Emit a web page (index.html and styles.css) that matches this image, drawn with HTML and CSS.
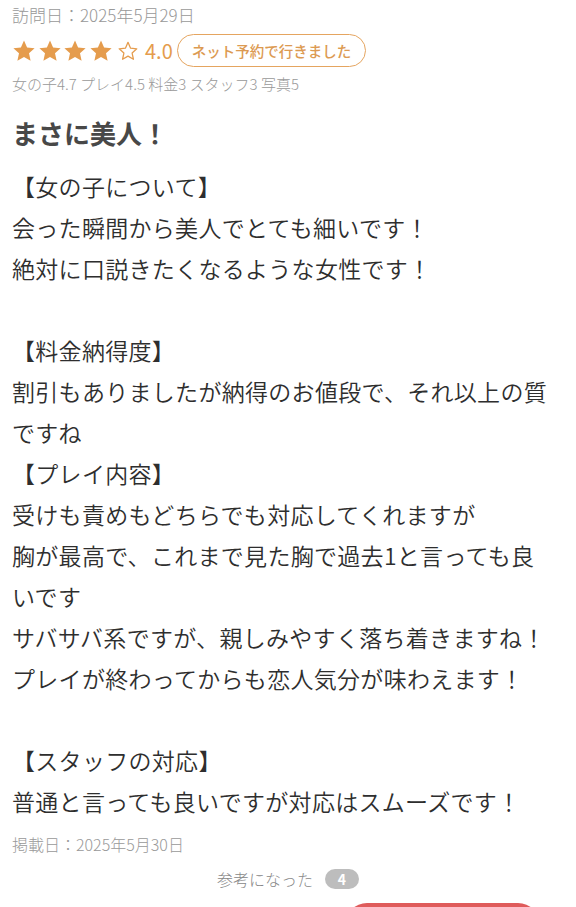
FILE: index.html
```html
<!DOCTYPE html>
<html lang="ja">
<head>
<meta charset="utf-8">
<link rel="stylesheet" href="styles.css">
</head>
<body>
<div class="review">
  <div class="visit">訪問日：2025年5月29日</div>
  <div class="rating">
    <div class="stars">
      <svg class="star" viewBox="0 0 24 24"><polygon points="12,1.5 15.1,8.4 22.6,9.2 17,14.3 18.6,21.7 12,17.9 5.4,21.7 7,14.3 1.4,9.2 8.9,8.4"/></svg>
      <svg class="star" viewBox="0 0 24 24"><polygon points="12,1.5 15.1,8.4 22.6,9.2 17,14.3 18.6,21.7 12,17.9 5.4,21.7 7,14.3 1.4,9.2 8.9,8.4"/></svg>
      <svg class="star" viewBox="0 0 24 24"><polygon points="12,1.5 15.1,8.4 22.6,9.2 17,14.3 18.6,21.7 12,17.9 5.4,21.7 7,14.3 1.4,9.2 8.9,8.4"/></svg>
      <svg class="star" viewBox="0 0 24 24"><polygon points="12,1.5 15.1,8.4 22.6,9.2 17,14.3 18.6,21.7 12,17.9 5.4,21.7 7,14.3 1.4,9.2 8.9,8.4"/></svg>
      <svg class="star empty" viewBox="0 0 24 24"><polygon points="12,2.5 14.8,8.9 21.6,9.6 16.5,14.2 17.9,21 12,17.6 6.1,21 7.5,14.2 2.4,9.6 9.2,8.9"/></svg>
    </div>
    <span class="score">4.0</span>
    <span class="tag">ネット予約で行きました</span>
  </div>
  <div class="scores">女の子4.7 プレイ4.5 料金3 スタッフ3 写真5</div>
  <h1 class="title">まさに美人！</h1>
  <div class="body">
    <p>【女の子について】</p>
    <p>会った瞬間から美人でとても細いです！</p>
    <p>絶対に口説きたくなるような女性です！</p>
    <p class="blank"></p>
    <p>【料金納得度】</p>
    <p>割引もありましたが納得のお値段で、それ以上の質ですね</p>
    <p>【プレイ内容】</p>
    <p>受けも責めもどちらでも対応してくれますが</p>
    <p>胸が最高で、これまで見た胸で過去1と言っても良いです</p>
    <p>サバサバ系ですが、親しみやすく落ち着きますね！</p>
    <p>プレイが終わってからも恋人気分が味わえます！</p>
    <p class="blank"></p>
    <p>【スタッフの対応】</p>
    <p>普通と言っても良いですが対応はスムーズです！</p>
  </div>
  <div class="posted">掲載日：2025年5月30日</div>
  <div class="helpful">
    <span class="helpful-label">参考になった</span>
    <span class="badge">4</span>
  </div>
  <div class="actions">
    <div class="btn-red"></div>
  </div>
</div>
</body>
</html>
```
FILE: styles.css
```css
* { box-sizing: border-box; }
html, body {
  margin: 0;
  padding: 0;
  background: #ffffff;
}
body {
  font-family: "Noto Sans CJK JP", "Noto Sans", sans-serif;
  color: #333333;
  overflow: hidden;
}
.review {
  padding: 0 20px 0 12px;
}
.visit {
  margin-top: 5px;
  font-size: 17px;
  line-height: 20px;
  font-weight: 300;
  color: #999999;
}
.rating {
  margin-top: 9px;
  height: 33px;
  display: flex;
  align-items: center;
}
.stars {
  display: flex;
  align-items: center;
  gap: 1.5px;
}
.star {
  width: 24px;
  height: 24px;
  fill: #e59c4d;
}
.star.empty {
  width: 22px;
  height: 22px;
  margin-left: 3px;
  fill: none;
  stroke: #e59c4d;
  stroke-width: 1.4;
  stroke-linejoin: round;
}
.score {
  margin-left: 6px;
  font-size: 20px;
  font-weight: 400;
  color: #e59c4d;
  line-height: 1;
}
.tag {
  margin-left: 4px;
  height: 33px;
  display: inline-flex;
  align-items: center;
  padding: 0 14px;
  border: 1.6px solid #e5a560;
  border-radius: 17px;
  font-size: 14.5px;
  font-weight: 500;
  color: #dc9a52;
}
.scores {
  margin-top: 7px;
  font-size: 15px;
  line-height: 20px;
  font-weight: 300;
  color: #999999;
}
.title {
  margin: 21px 0 0;
  font-size: 26px;
  line-height: 36px;
  font-weight: 700;
  color: #484848;
}
.body {
  margin-top: 14.5px;
  font-size: 23px;
  letter-spacing: 0.3px;
  line-height: 41px;
  font-weight: 350;
  color: #2e2e2e;
}
.body p {
  margin: 0;
  min-height: 41px;
}
.posted {
  margin-top: 12.5px;
  font-size: 16px;
  line-height: 20px;
  font-weight: 300;
  color: #999999;
}
.helpful {
  margin-top: 13px;
  height: 24px;
  display: flex;
  justify-content: center;
  align-items: center;
  gap: 12px;
  padding-left: 8px;
}
.helpful-label {
  font-size: 16px;
  font-weight: 300;
  color: #888888;
}
.badge {
  width: 34px;
  height: 20px;
  border-radius: 10px;
  background: #bdbdbd;
  color: #ffffff;
  font-size: 14px;
  font-weight: 700;
  display: inline-flex;
  align-items: center;
  justify-content: center;
}
.actions {
  margin-top: 12px;
  display: flex;
  justify-content: flex-end;
  padding-right: 16px;
}
.btn-red {
  width: 195px;
  height: 44px;
  border-radius: 22px;
  background: #df5b5b;
}
```
